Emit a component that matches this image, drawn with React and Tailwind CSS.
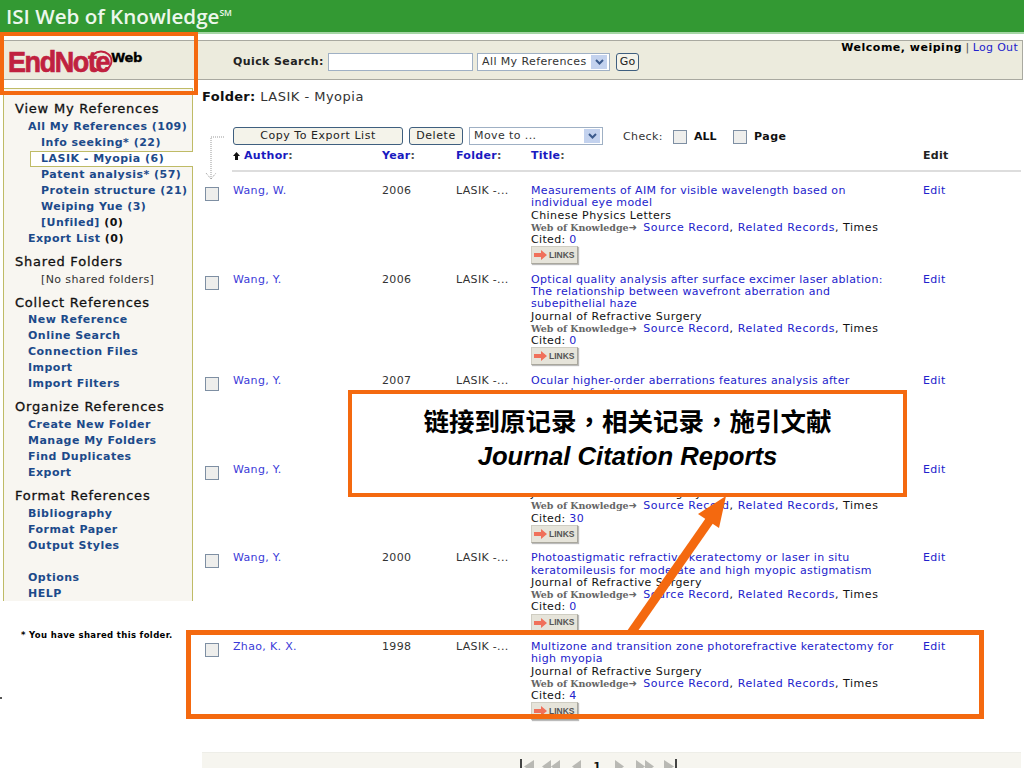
import React from 'react';

const VERDANA = 'font-["DejaVu_Sans",Verdana,sans-serif]';

const MY_REFS = [
  { label: 'All My References', count: '(109)', indent: 'pl-[24px]' },
  { label: 'Info seeking*', count: '(22)', indent: 'pl-[37px]' },
  { label: 'LASIK - Myopia', count: '(6)', indent: 'pl-[37px]', active: true },
  { label: 'Patent analysis*', count: '(57)', indent: 'pl-[37px]' },
  { label: 'Protein structure', count: '(21)', indent: 'pl-[37px]' },
  { label: 'Weiping Yue', count: '(3)', indent: 'pl-[37px]' },
  { label: '[Unfiled]', count: '(0)', indent: 'pl-[37px]', darkCount: true },
  { label: 'Export List', count: '(0)', indent: 'pl-[24px]', darkCount: true },
];

const REFS = [
  {
    author: 'Wang, W.',
    year: '2006',
    title: ['Measurements of AIM for visible wavelength based on', 'individual eye model'],
    journal: 'Chinese Physics Letters',
    cited: '0',
  },
  {
    author: 'Wang, Y.',
    year: '2006',
    title: [
      'Optical quality analysis after surface excimer laser ablation:',
      'The relationship between wavefront aberration and',
      'subepithelial haze',
    ],
    journal: 'Journal of Refractive Surgery',
    cited: '0',
  },
  {
    // everything below the title sits under the callout
    author: 'Wang, Y.',
    year: '2007',
    title: ['Ocular higher-order aberrations features analysis after', 'corneal refractive surgery'],
    journal: '\u00a0',
    cited: '',
    covered: true,
  },
  {
    author: 'Wang, Y.',
    year: '',
    folderCovered: true,
    title: ['\u00a0', '\u00a0'],
    journal: 'Journal of Refractive Surgery',
    cited: '30',
  },
  {
    author: 'Wang, Y.',
    year: '2000',
    title: [
      'Photoastigmatic refractive keratectomy or laser in situ',
      'keratomileusis for moderate and high myopic astigmatism',
    ],
    journal: 'Journal of Refractive Surgery',
    cited: '0',
  },
  {
    author: 'Zhao, K. X.',
    year: '1998',
    title: ['Multizone and transition zone photorefractive keratectomy for', 'high myopia'],
    journal: 'Journal of Refractive Surgery',
    cited: '4',
  },
];

const SideHeading = ({ children, className = '' }) => (
  <div className={`h-[18px] pl-[11px] text-[13px] leading-[18px] text-[#111] tracking-[0.78px] [-webkit-text-stroke:0.3px_#111] ${className}`}>{children}</div>
);

const SideLink = ({ children, className = '' }) => (
  <div className={`h-4 pl-[24px] text-[11px] leading-4 font-bold text-[#1c4a8a] tracking-[0.48px] ${className}`}>{children}</div>
);

const Checkbox = ({ className = '' }) => (
  <input
    type="checkbox"
    readOnly
    className={`block appearance-none w-[14px] h-[14px] border border-[#7e8fa3] bg-[#eeeeec] ${className}`}
  />
);

const SelectBox = ({ label, className = '' }) => (
  <div className={`flex items-center justify-between h-[18px] border border-[#9fb0c4] bg-white pl-[4px] pr-[2px] text-[11px] tracking-[0.4px] text-[#333] ${className}`}>
    <span>{label}</span>
    <span className="flex items-center justify-center w-[16px] h-[14px] bg-[#c3d2ee]">
      <svg width="9" height="6" viewBox="0 0 9 6">
        <path d="M1 1l3.5 3.5L8 1" fill="none" stroke="#3b5a8c" strokeWidth="2" />
      </svg>
    </span>
  </div>
);

const LinksButton = () => (
  <div className="flex items-center gap-[2px] w-[47px] h-[18px] pl-[2px] bg-[#e6e4da] border border-[#cfcdc2] border-b-[#a9a79d] border-r-[#a9a79d] shadow-[1px_1px_1px_#bbb]">
    <svg width="13" height="10" viewBox="0 0 13 10" className="shrink-0">
      <path d="M0 3h7V0l6 5-6 5V7H0z" fill="#f0705a" />
    </svg>
    <span className='font-["Liberation_Sans",Arial,sans-serif] text-[8.5px] tracking-[0] font-bold text-[#555]'>LINKS</span>
  </div>
);

const RefRow = ({ ref_ }) => (
  <div className="grid grid-cols-[31px_149px_74px_75px_392px_1fr] pb-[9.5px] text-[11px] leading-[12.25px] tracking-[0.33px]">
    <Checkbox className="mt-[2px] ml-[3px]" />
    <div className="text-[#3b3bd8]">{ref_.author}</div>
    <div className="text-[#333]">{ref_.year}</div>
    <div className={`text-[#333] ${ref_.folderCovered ? 'invisible' : ''}`}>LASIK -...</div>
    <div className="text-[#111]">
      {ref_.title.map((line, i) => (
        <div key={i} className="text-[#2222cc] whitespace-nowrap">{line}</div>
      ))}
      <div className="tracking-[0.45px]">{ref_.journal}</div>
      <div className={`whitespace-nowrap tracking-[0.55px] ${ref_.covered ? 'invisible' : ''}`}>
        <span className='font-["DejaVu_Serif",serif] font-bold text-[9.5px] text-[#666] tracking-[-0.05px]'>Web of Knowledge</span>
        <span className="text-[#666] text-[10px] mr-[2px]">➜ </span>
        <span className="text-[#2222cc]">Source Record</span>, <span className="text-[#2222cc]">Related Records</span>, Times
      </div>
      <div className={ref_.covered ? 'invisible' : ''}>Cited: <span className="text-[#2222cc]">{ref_.cited}</span></div>
      <div className={ref_.covered ? 'invisible' : ''}><LinksButton /></div>
    </div>
    <div className="text-[#2222cc]">Edit</div>
  </div>
);

const PageArrow = ({ d, dark, className = '' }) => (
  <svg width="20" height="17" viewBox="0 0 20 17" className={`shrink-0 ${className}`}>
    <path d={d} fill="#b9b9b4" />
    {dark && <path d={dark} fill="#444" />}
  </svg>
);

export default function App() {
  return (
    <div className={`relative w-[1024px] h-[768px] overflow-hidden bg-white ${VERDANA}`}>
      {/* top bar */}
      <div className="h-[34px] bg-[#339933] border-b-2 border-[#a5d6a5] pl-[6px] flex items-center">
        <span className='font-["Open_Sans",sans-serif] font-semibold text-[20.6px] leading-none text-[#ecf7ec]'>
          ISI Web of Knowledge
        </span>
        <span className='font-["Open_Sans",sans-serif] font-semibold text-[8.5px] text-[#ecf7ec] self-start mt-[7px]'>SM</span>
      </div>

      {/* toolbar */}
      <div className="flex mt-[6px] mx-[1px] ml-[2px] h-[40px] bg-[#ecebdd] border border-[#a9a9a0]">
        <div className="relative w-[230px] shrink-0 flex items-start pl-[5px] pt-[6px]">
          <span className='font-["Liberation_Sans",sans-serif] font-bold text-[29px] leading-[30px] text-[#c0213f] tracking-[-1.5px] scale-x-[0.93] origin-left [-webkit-text-stroke:0.7px_#c0213f]'>
            EndNote
          </span>
          <svg className="absolute left-[86px] top-[8px]" width="24" height="24" viewBox="0 0 24 24">
            <ellipse cx="12" cy="12" rx="10.5" ry="9.5" fill="none" stroke="#c0213f" strokeWidth="1.8" />
          </svg>
          <span className="absolute left-[108px] top-[9px] text-[13px] leading-4 font-bold text-black tracking-[-0.4px] [-webkit-text-stroke:0.3px_#000]">Web</span>
        </div>
        <div className="flex items-center pt-[4px]">
          <span className="text-[11px] font-bold text-[#222] tracking-[0.4px] w-[95px]">Quick Search:</span>
          <div className="w-[145px] h-[18px] bg-white border border-[#9fb0c4]" />
          <SelectBox label="All My References" className="w-[133px] ml-[4px]" />
          <div className="flex items-center justify-center ml-[6px] w-[23px] h-[18px] rounded-[3px] border border-[#3f5f7f] bg-[#f4f3ea] text-[11px] text-[#222]">Go</div>
        </div>
        <div className="ml-auto pr-[4px] pt-[0px] text-[11px] leading-[13px] whitespace-nowrap">
          <b className="text-black tracking-[0.5px]">Welcome, weiping</b> <span className="text-[#555]">|</span> <span className="text-[#2222cc] tracking-[0.3px]">Log Out</span>
        </div>
      </div>

      <div className="flex">
        {/* left nav */}
        <div className="w-[193px] shrink-0 pl-[3px] pt-[8px]">
          <div className="h-[513px] pt-[11px] bg-[#f8f6f1] border-x border-t border-[#bfbb66]">
            <SideHeading>View My References</SideHeading>
            <div className="mt-[1px]">
              {MY_REFS.map(r => (
                <div
                  key={r.label}
                  className={`h-4 text-[11px] leading-4 font-bold text-[#1c4a8a] tracking-[0.48px] ${r.indent} ${r.active ? 'ml-[26px] !pl-[10px] -mr-px bg-white border border-r-0 border-[#bfbb66] leading-[14px]' : ''}`}
                >
                  {r.label} <span className={r.darkCount ? 'text-[#111]' : ''}>{r.count}</span>
                </div>
              ))}
            </div>

            <SideHeading className="mt-[6px]">Shared Folders</SideHeading>
            <div className="mt-[1px] h-4 pl-[37px] text-[11px] leading-4 text-[#333] tracking-[0.4px]">[No shared folders]</div>

            <SideHeading className="mt-[6px]">Collect References</SideHeading>
            <SideLink>New Reference</SideLink>
            <SideLink>Online Search</SideLink>
            <SideLink>Connection Files</SideLink>
            <SideLink>Import</SideLink>
            <SideLink>Import Filters</SideLink>

            <SideHeading className="mt-[6px]">Organize References</SideHeading>
            <SideLink className="mt-[1px]">Create New Folder</SideLink>
            <SideLink>Manage My Folders</SideLink>
            <SideLink>Find Duplicates</SideLink>
            <SideLink>Export</SideLink>

            <SideHeading className="mt-[6px]">Format References</SideHeading>
            <SideLink className="mt-[1px]">Bibliography</SideLink>
            <SideLink>Format Paper</SideLink>
            <SideLink>Output Styles</SideLink>

            <SideLink className="mt-4">Options</SideLink>
            <SideLink>HELP</SideLink>
          </div>
          <div className="mt-[28px] pl-[18px] font-bold text-[8.5px] leading-3 text-black tracking-[0.35px] whitespace-nowrap">
            * You have shared this folder.
          </div>
        </div>

        {/* reference list */}
        <div className="flex-1 min-w-0 pl-[9px] pr-[3px]">
          <div className="mt-[8px] h-[18px] text-[13px] leading-[18px] tracking-[0.5px] text-[#333]">
            <b className="text-[#111] tracking-[0.3px]">Folder:</b> LASIK - Myopia
          </div>

          <div className="flex items-center mt-[21px] h-[18px] pl-[31px] text-[11px]">
            <div className="flex items-center justify-center w-[170px] h-[18px] rounded-[3px] border border-[#3f5f7f] bg-[#f4f3ea] text-[#222] tracking-[0.55px]">Copy To Export List</div>
            <div className="flex items-center justify-center ml-[6px] w-[54px] h-[18px] rounded-[3px] border border-[#3f5f7f] bg-[#f4f3ea] text-[#222] tracking-[0.55px]">Delete</div>
            <SelectBox label="Move to ..." className="ml-[6px] w-[134px]" />
            <span className="ml-[20px] w-[50px] mt-[3px] text-[#333] tracking-[0.4px]">Check:</span>
            <Checkbox className="mt-[2px]" />
            <b className="ml-[7px] mt-[3px] w-[39px] text-[#111]">ALL</b>
            <Checkbox className="mt-[2px]" />
            <b className="ml-[7px] mt-[3px] text-[#111] tracking-[0.5px]">Page</b>
          </div>

          <div className="grid grid-cols-[31px_149px_74px_75px_392px_1fr] mt-[2px] h-[18px] text-[11px] leading-[18px] font-bold tracking-[0.3px]">
            <div />
            <div className="flex items-center text-[#1a1ac0] whitespace-nowrap">
              <svg width="7" height="8" viewBox="0 0 7 8" className="mr-[4px]">
                <path d="M3.5 0L7 4H5v4H2V4H0z" fill="#111" />
              </svg>
              Author<span className="text-[#555]">:</span>
            </div>
            <div className="text-[#1a1ac0]">Year<span className="text-[#555]">:</span></div>
            <div className="text-[#1a1ac0]">Folder<span className="text-[#555]">:</span></div>
            <div className="text-[#1a1ac0]">Title<span className="text-[#555]">:</span></div>
            <div className="text-[#222]">Edit</div>
          </div>

          <div className="mt-[5px] ml-[30px] h-[2px] bg-[#dddddd]" />

          <div className="mt-[13px]">
            {REFS.map((r, i) => <RefRow key={i} ref_={r} />)}
          </div>

          {/* pager */}
          <div className="flex items-start mt-[22px] h-[30px] pl-[316px] pt-[4px] bg-[#f6f5ef] border-t border-[#eeeee8] text-[11px] font-bold text-[#111]">
            <PageArrow d="M16 3v13L6 9.5z" dark="M2 2h2v14H2z" />
            <PageArrow className="ml-[2px]" d="M11 3v13L2 9.5zM20 3v13l-9-6.5z" />
            <PageArrow className="ml-[6px]" d="M15 3v13L6 9.5z" />
            <span className="ml-[6px] mr-[8px] w-[10px] pt-[4px] leading-3 text-center">1</span>
            <PageArrow d="M5 3v13l9-6.5z" />
            <PageArrow className="ml-[5px]" d="M1 3v13l9-6.5zM10 3v13l9-6.5z" />
            <PageArrow className="ml-[5px]" d="M4 3v13l10-6.5z" dark="M15 2h2v14h-2z" />
          </div>
        </div>
      </div>

      {/* dotted drop line from the action bar to the checkboxes */}
      <svg className="absolute left-[203px] top-[135px]" width="24" height="47" viewBox="0 0 24 47">
        <path d="M21 2H8v42M3 38l5 6 5-6" fill="none" stroke="#999" strokeDasharray="1 1" />
      </svg>

      <div className="absolute left-0 top-[697px] w-[2px] h-[2px] bg-[#555]" />

      {/* orange slide annotations */}
      <div className="absolute left-0 top-[32px] w-[198px] h-[63px] border-[4px] border-[#f4690f]" />
      <div className="absolute left-[186px] top-[630px] w-[798px] h-[89px] border-[5px] border-[#f4690f]" />
      <svg className="absolute left-[620px] top-[490px]" width="120" height="145" viewBox="0 0 120 145">
        <path d="M11 143L92 27" stroke="#f4690f" strokeWidth="9" fill="none" />
        <path d="M106 6L78 24L99 38z" fill="#f4690f" />
      </svg>
      <div className="absolute left-[348px] top-[390px] w-[559px] h-[107px] flex flex-col items-center pt-[9px] bg-white border-[4px] border-[#f4690f]">
        <div className='font-["Noto_Sans_CJK_TC","Noto_Sans_CJK_SC",sans-serif] font-bold text-[25.5px] leading-[34px] text-black whitespace-nowrap'>
          链接到原记录，相关记录，施引文献
        </div>
        <div className='mt-[2px] font-["Liberation_Sans",sans-serif] font-bold italic text-[25.7px] leading-[34px] text-black whitespace-nowrap'>
          Journal Citation Reports
        </div>
      </div>
    </div>
  );
}
